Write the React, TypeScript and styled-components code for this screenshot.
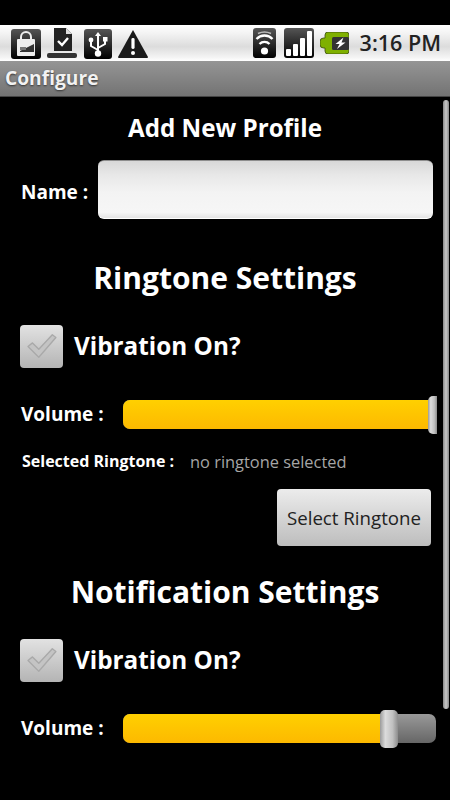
import styled, { createGlobalStyle } from 'styled-components';

const GlobalStyle = createGlobalStyle`
  html, body {
    margin: 0;
    padding: 0;
    background: #000;
  }
  * {
    box-sizing: border-box;
  }
`;

function LockIcon() {
  return (
    <svg width="30" height="30" viewBox="0 0 30 30">
      <defs>
        <linearGradient id="tile" x1="0" y1="0" x2="0" y2="1">
          <stop offset="0" stopColor="#555" />
          <stop offset="1" stopColor="#000" />
        </linearGradient>
      </defs>
      <rect width="30" height="30" rx="3" fill="url(#tile)" />
      <path d="M10 11V8a5 5 0 0 1 10 0v3" fill="none" stroke="#eee" strokeWidth="2" />
      <rect x="6" y="10" width="18" height="17" rx="1" fill="#eee" />
      <path d="M9 22l14-7v8H9z" fill="#333" />
      <path d="M9 18h6v3H9z" fill="#777" />
    </svg>
  );
}

function DownloadDoneIcon() {
  return (
    <svg width="31" height="31" viewBox="0 0 31 31">
      <path d="M7 0h12l6 6v17H7z" fill="#222" />
      <path d="M19 0l6 6h-6z" fill="#ddd" />
      <path d="M11 13l4 4 6-7" fill="none" stroke="#fff" strokeWidth="2.4" />
      <rect x="0" y="25" width="30" height="5" rx="2" fill="#333" />
    </svg>
  );
}

function UsbIcon() {
  return (
    <svg width="28" height="30" viewBox="0 0 28 30">
      <rect width="28" height="30" rx="3" fill="url(#tile)" />
      <path d="M14 3l-3 4h2v15h2V7h2z" fill="#fff" />
      <path d="M14 21l-7-4v-4M14 19l7-4v-3" fill="none" stroke="#fff" strokeWidth="2" />
      <circle cx="7" cy="11" r="2.4" fill="#fff" />
      <rect x="19" y="8" width="4.5" height="4.5" fill="#fff" />
      <circle cx="14" cy="24.5" r="3.2" fill="#fff" />
    </svg>
  );
}

function WarningIcon() {
  return (
    <svg width="30" height="28" viewBox="0 0 30 28">
      <path d="M15 0L30 27a1 1 0 0 1-1 1H1a1 1 0 0 1-1-1z" fill="#1a1a1a" />
      <rect x="13.4" y="8" width="3.2" height="11" rx="1.4" fill="#fff" />
      <circle cx="15" cy="23" r="2" fill="#fff" />
    </svg>
  );
}

function WifiIcon() {
  return (
    <svg width="23" height="30" viewBox="0 0 23 30">
      <rect width="23" height="30" rx="3" fill="url(#tile)" />
      <path d="M3.500 11a11 11 0 0 1 16 0M6.500 16a7 7 0 0 1 10 0" fill="none" stroke="#fff" strokeWidth="2.4" />
      <path d="M5 5.500a15 15 0 0 1 13 0" fill="none" stroke="#bbb" strokeWidth="1.600" />
      <circle cx="11.500" cy="23" r="3.600" fill="#fff" />
    </svg>
  );
}

function SignalIcon() {
  return (
    <svg width="30" height="30" viewBox="0 0 30 30">
      <rect width="30" height="30" rx="3" fill="url(#tile)" />
      <rect x="2" y="21" width="5" height="7" rx="1" fill="#fff" />
      <rect x="9" y="16" width="5" height="12" rx="1" fill="#fff" />
      <rect x="16" y="10" width="5" height="18" rx="1" fill="#fff" />
      <rect x="23" y="3" width="5" height="25" rx="1" fill="#fff" />
    </svg>
  );
}

function BatteryIcon() {
  return (
    <svg width="29" height="22" viewBox="0 0 29 22">
      <path
        d="M3.500 6H5V3a3 3 0 0 1 3-3h18a3 3 0 0 1 3 3v16a3 3 0 0 1-3 3H8a3 3 0 0 1-3-3v-3H3.500A3.500 3.500 0 0 1 0 12.500v-3A3.500 3.500 0 0 1 3.500 6z"
        fill="#7fb000"
        stroke="#3a4a10"
        strokeWidth="0.8"
      />
      <rect x="12" y="5" width="17" height="13" rx="1.500" fill="#333" />
      <path d="M23.500 5.500l-8 6.500h4l-2.500 5 8.500-6.500h-4l2-5z" fill="#fff" />
    </svg>
  );
}

function CheckMark() {
  return (
    <svg width="31" height="27" viewBox="0 0 34 30">
      <path
        d="M2 15l5-4 7 7L29 2l4 3-19 22z"
        fill="#c4c4c4"
        stroke="#a9a9a9"
        strokeWidth="1.500"
        strokeLinejoin="round"
      />
    </svg>
  );
}

function VibrationRow() {
  return (
    <CheckRow>
      <CheckBox>
        <CheckMark />
      </CheckBox>
      <CheckLabel>Vibration On?</CheckLabel>
    </CheckRow>
  );
}

function VolumeRow({ percent, slim }: { percent: number; slim?: boolean }) {
  return (
    <SliderRow>
      <VolumeLabel>Volume :</VolumeLabel>
      <Track>
        <TrackFill style={{ width: `${percent}%` }} />
        <Thumb $slim={slim} style={{ left: `${percent}%` }} />
      </Track>
    </SliderRow>
  );
}

export default function App() {
  return (
    <Screen>
      <GlobalStyle />
      <StatusBar>
        <IconGroup>
          <LockIcon />
          <DownloadDoneIcon />
          <UsbIcon />
          <WarningIcon />
        </IconGroup>
        <IconGroup>
          <WifiSlot>
            <WifiIcon />
          </WifiSlot>
          <SignalIcon />
          <BatteryIcon />
          <Clock>3:16 PM</Clock>
        </IconGroup>
      </StatusBar>
      <TitleBar>Configure</TitleBar>
      <Content>
        <Scrollbar />
        <ProfileTitle>Add New Profile</ProfileTitle>
        <NameRow>
          <NameLabel>Name :</NameLabel>
          <NameInput />
        </NameRow>
        <SectionTitle>Ringtone Settings</SectionTitle>
        <VibrationRow />
        <VolumeRow percent={97.3} slim />
        <RingtoneRow>
          <SmallLabel>Selected Ringtone :</SmallLabel>
          <RingtoneValue>no ringtone selected</RingtoneValue>
        </RingtoneRow>
        <ButtonRow>
          <SelectButton>Select Ringtone</SelectButton>
        </ButtonRow>
        <SectionTitle $second>Notification Settings</SectionTitle>
        <VibrationRow />
        <VolumeRow percent={82.1} />
      </Content>
    </Screen>
  );
}

const Screen = styled.div`
  width: 450px;
  height: 800px;
  overflow: hidden;
  padding-top: 25px;
  background: #000;
  color: #fff;
  font-family: "Open Sans", "Noto Sans", sans-serif;
`;

const StatusBar = styled.div`
  height: 36px;
  padding: 3px 9px 0 11px;
  display: flex;
  justify-content: space-between;
  align-items: flex-start;
  background: linear-gradient(#fff 0%, #f2f2f2 25%, #dcdcdc 60%, #f4f4f4 90%, #fff 100%);
`;

const IconGroup = styled.div`
  display: flex;
  align-items: center;
  gap: 6px;
`;

const WifiSlot = styled.div`
  display: flex;
  margin-right: 2px;
`;

const Clock = styled.span`
  margin-left: 5px;
  color: #222;
  font-size: 21.5px;
  font-weight: 600;
  line-height: 30px;
  white-space: nowrap;
`;

const TitleBar = styled.div`
  height: 36px;
  padding: 0 5px 2px;
  display: flex;
  align-items: center;
  background: linear-gradient(#959595, #737373);
  border-bottom: 1px solid #444;
  font-size: 19.2px;
  font-weight: 700;
  color: #f2f2f2;
  text-shadow: 0 1px 2px #333;
`;

const Content = styled.div`
  position: relative;
  height: 703px;
`;

const Scrollbar = styled.div`
  position: absolute;
  top: 3px;
  right: 1px;
  width: 6px;
  height: 609px;
  border-radius: 3px;
  background: linear-gradient(90deg, #888, #c8c8c8 50%, #888);
`;

const ProfileTitle = styled.div`
  height: 63px;
  padding-bottom: 3px;
  display: flex;
  align-items: center;
  justify-content: center;
  font-size: 24.2px;
  font-weight: 700;
`;

const NameRow = styled.div`
  display: flex;
  align-items: center;
  gap: 10px;
  padding-left: 21px;
  padding-right: 17px;
`;

const FieldLabel = styled.span`
  font-size: 19px;
  font-weight: 700;
  white-space: nowrap;
`;

const NameLabel = styled(FieldLabel)`
  margin-top: 4px;
`;

const VolumeLabel = styled(FieldLabel)`
  margin-bottom: 2px;
`;

const NameInput = styled.div`
  flex: 1;
  height: 59px;
  border-radius: 6px;
  background: linear-gradient(#d8d8d8, #e8e8e8 25%, #f3f3f3 55%, #f6f6f6 90%, #e4e4e4);
  border-top: 1px solid #8e8e8e;
  border-bottom: 1px solid #fff;
`;

const SectionTitle = styled.div<{ $second?: boolean }>`
  margin-top: ${(p) => (p.$second ? '22px' : '35px')};
  height: 46px;
  display: flex;
  align-items: center;
  justify-content: center;
  font-size: 30px;
  font-weight: 700;
`;

const CheckRow = styled.div`
  margin-top: 25px;
  padding-left: 20px;
  display: flex;
  align-items: center;
  gap: 11px;
`;

const CheckBox = styled.div`
  width: 43px;
  height: 43px;
  display: flex;
  align-items: center;
  justify-content: center;
  border-radius: 4px;
  background: linear-gradient(#e2e2e2, #b4b4b4);
`;

const CheckLabel = styled.span`
  padding-bottom: 2px;
  font-size: 24.3px;
  font-weight: 700;
  white-space: nowrap;
`;

const SliderRow = styled.div`
  margin-top: 32px;
  height: 29px;
  padding-left: 21px;
  padding-right: 14px;
  display: flex;
  align-items: center;
  gap: 19px;
`;

const Track = styled.div`
  position: relative;
  flex: 1;
  height: 29px;
  border-radius: 7px;
  background: linear-gradient(#999, #666);
`;

const TrackFill = styled.div`
  height: 100%;
  border-radius: 7px 0 0 7px;
  background: linear-gradient(#ffd000, #fdb900);
`;

const Thumb = styled.div<{ $slim?: boolean }>`
  position: absolute;
  top: -4px;
  width: ${(p) => (p.$slim ? '9px' : '18px')};
  height: 38px;
  border-radius: ${(p) => (p.$slim ? '5px 0 0 5px' : '5px')};
  background: linear-gradient(90deg, #9a9a9a, #dcdcdc 30%, #c0c0c0 70%, #8c8c8c);
`;

const RingtoneRow = styled.div`
  margin-top: 20px;
  padding-left: 22px;
  display: flex;
  align-items: center;
  gap: 16px;
  height: 24px;
`;

const SmallLabel = styled.span`
  font-size: 16px;
  font-weight: 700;
  white-space: nowrap;
`;

const RingtoneValue = styled.span`
  font-size: 16.4px;
  color: #a6a6a6;
  white-space: nowrap;
`;

const ButtonRow = styled.div`
  margin-top: 16px;
  padding-right: 19px;
  display: flex;
  justify-content: flex-end;
`;

const SelectButton = styled.div`
  width: 154px;
  height: 57px;
  display: flex;
  align-items: center;
  justify-content: center;
  border-radius: 4px;
  background: linear-gradient(#ececec, #bdbdbd);
  color: #222;
  font-size: 18.7px;
  white-space: nowrap;
`;
